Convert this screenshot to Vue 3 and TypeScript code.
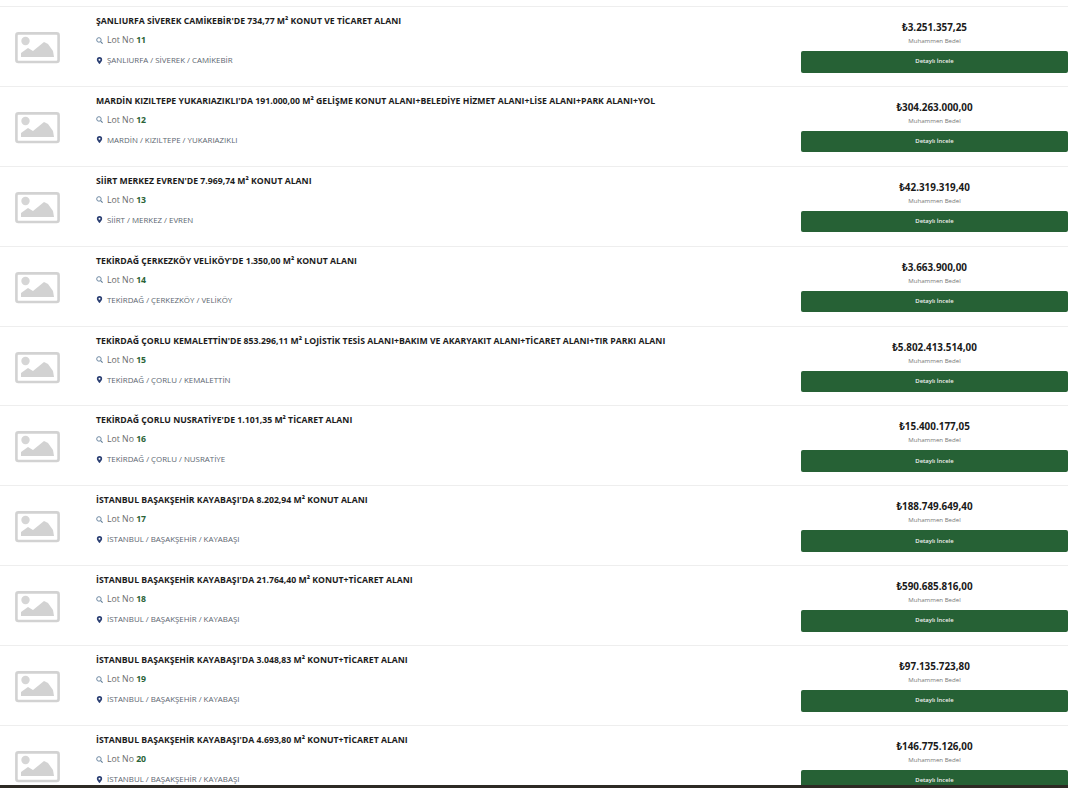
<script setup lang="ts">
interface Lot { title: string; no: number; place: string; price: string }
const lots: Lot[] = [
  { title: "ŞANLIURFA SİVEREK CAMİKEBİR'DE 734,77 M² KONUT VE TİCARET ALANI", no: 11, place: 'ŞANLIURFA / SİVEREK / CAMİKEBİR', price: '₺3.251.357,25' },
  { title: "MARDİN KIZILTEPE YUKARIAZIKLI'DA 191.000,00 M² GELİŞME KONUT ALANI+BELEDİYE HİZMET ALANI+LİSE ALANI+PARK ALANI+YOL", no: 12, place: 'MARDİN / KIZILTEPE / YUKARIAZIKLI', price: '₺304.263.000,00' },
  { title: "SİİRT MERKEZ EVREN'DE 7.969,74 M² KONUT ALANI", no: 13, place: 'SİİRT / MERKEZ / EVREN', price: '₺42.319.319,40' },
  { title: "TEKİRDAĞ ÇERKEZKÖY VELİKÖY'DE 1.350,00 M² KONUT ALANI", no: 14, place: 'TEKİRDAĞ / ÇERKEZKÖY / VELİKÖY', price: '₺3.663.900,00' },
  { title: "TEKİRDAĞ ÇORLU KEMALETTİN'DE 853.296,11 M² LOJİSTİK TESİS ALANI+BAKIM VE AKARYAKIT ALANI+TİCARET ALANI+TIR PARKI ALANI", no: 15, place: 'TEKİRDAĞ / ÇORLU / KEMALETTİN', price: '₺5.802.413.514,00' },
  { title: "TEKİRDAĞ ÇORLU NUSRATİYE'DE 1.101,35 M² TİCARET ALANI", no: 16, place: 'TEKİRDAĞ / ÇORLU / NUSRATİYE', price: '₺15.400.177,05' },
  { title: "İSTANBUL BAŞAKŞEHİR KAYABAŞI'DA 8.202,94 M² KONUT ALANI", no: 17, place: 'İSTANBUL / BAŞAKŞEHİR / KAYABAŞI', price: '₺188.749.649,40' },
  { title: "İSTANBUL BAŞAKŞEHİR KAYABAŞI'DA 21.764,40 M² KONUT+TİCARET ALANI", no: 18, place: 'İSTANBUL / BAŞAKŞEHİR / KAYABAŞI', price: '₺590.685.816,00' },
  { title: "İSTANBUL BAŞAKŞEHİR KAYABAŞI'DA 3.048,83 M² KONUT+TİCARET ALANI", no: 19, place: 'İSTANBUL / BAŞAKŞEHİR / KAYABAŞI', price: '₺97.135.723,80' },
  { title: "İSTANBUL BAŞAKŞEHİR KAYABAŞI'DA 4.693,80 M² KONUT+TİCARET ALANI", no: 20, place: 'İSTANBUL / BAŞAKŞEHİR / KAYABAŞI', price: '₺146.775.126,00' },
]
</script>

<template>
  <div class="page">
    <div class="list">
      <article v-for="lot in lots" :key="lot.no" class="row">
        <div class="thumb">
          <svg width="45" height="32" viewBox="0 0 45 32" aria-hidden="true">
            <rect x="1.4" y="1.4" width="42.2" height="28.6" rx="2" fill="#fff" stroke="#d2d2d2" stroke-width="2.6" />
            <circle cx="10.5" cy="9" r="4.2" fill="#d6d6d6" />
            <path d="M6 25v-4l7-5 5 3 11-9 4 2 5 7 1 6z" fill="#d2d2d2" />
          </svg>
        </div>
        <div class="info">
          <h3 class="title">{{ lot.title }}</h3>
          <div class="lot">
            <svg width="7" height="7" viewBox="0 0 10 10" aria-hidden="true">
              <circle cx="4.2" cy="4.2" r="3.2" fill="none" stroke="#5f7d99" stroke-width="1.3" />
              <path d="M6.6 6.6 9.4 9.4" stroke="#5f7d99" stroke-width="1.6" />
            </svg>
            <span>Lot No <b>{{ lot.no }}</b></span>
          </div>
          <div class="place">
            <svg class="pin" width="7" height="7" viewBox="0 0 10 10" aria-hidden="true">
              <path fill-rule="evenodd" d="M5 0a3.8 3.8 0 0 1 3.8 3.8C8.8 6.2 5 10 5 10S1.2 6.2 1.2 3.8A3.8 3.8 0 0 1 5 0zm0 2.4a1.4 1.4 0 1 0 0 2.8 1.4 1.4 0 0 0 0-2.8z" fill="#2b3f73" />
            </svg>
            <span>{{ lot.place }}</span>
          </div>
        </div>
        <div class="side">
          <div class="price">{{ lot.price }}</div>
          <div class="label">Muhammen Bedel</div>
          <button class="detail" type="button">Detaylı İncele</button>
        </div>
      </article>
    </div>
    <div class="bar"></div>
  </div>
</template>

<style>
html, body { margin: 0; background: #fff; overflow: hidden; }
</style>

<style scoped>
.page {
  width: 1068px;
  height: 788px;
  display: flex;
  flex-direction: column;
  overflow: hidden;
  background: #fff;
  font-family: "Open Sans", "Noto Sans", sans-serif;
}
.list {
  flex: 1;
  min-height: 0;
  overflow: hidden;
  padding-top: 6px;
}
.row {
  height: 78.9px;
  border-top: 1px solid #eeeeee;
  display: grid;
  grid-template-columns: 96px 1fr 267px;
}
.thumb {
  padding: 25px 0 0 15px;
  box-sizing: border-box;
}
.thumb svg {
  display: block;
  filter: blur(0.4px);
}
.info {
  padding-top: 8px;
  min-width: 0;
}
.title {
  margin: 0;
  height: 12px;
  line-height: 12px;
  font-size: 8.7px;
  font-weight: 700;
  color: #1c1c1c;
  white-space: nowrap;
}
.lot {
  margin-top: 7px;
  height: 12px;
  display: flex;
  align-items: center;
  gap: 4px;
  font-size: 8.7px;
  color: #6a6a6a;
}
.lot b {
  font-weight: 700;
  color: #2a6337;
}
.place {
  margin-top: 8px;
  height: 12px;
  display: flex;
  align-items: center;
  gap: 4px;
  font-size: 7.9px;
  color: #5c6670;
}
.side {
  display: flex;
  flex-direction: column;
  align-items: center;
  padding-top: 13px;
}
.price {
  height: 14px;
  line-height: 14px;
  font-size: 9.9px;
  font-weight: 700;
  color: #1a1a1a;
}
.label {
  margin-top: 2px;
  height: 10px;
  line-height: 10px;
  font-size: 6.1px;
  color: #777;
}
.detail {
  margin-top: 5px;
  width: 100%;
  height: 21.5px;
  flex: none;
  border: 0;
  border-radius: 2px;
  background: #266135;
  color: #f2f2f2;
  font-family: inherit;
  font-size: 5.9px;
  font-weight: 600;
  padding: 0 0 1px;
}
.bar {
  flex: none;
  height: 3px;
  background: #2d2a24;
}
</style>
